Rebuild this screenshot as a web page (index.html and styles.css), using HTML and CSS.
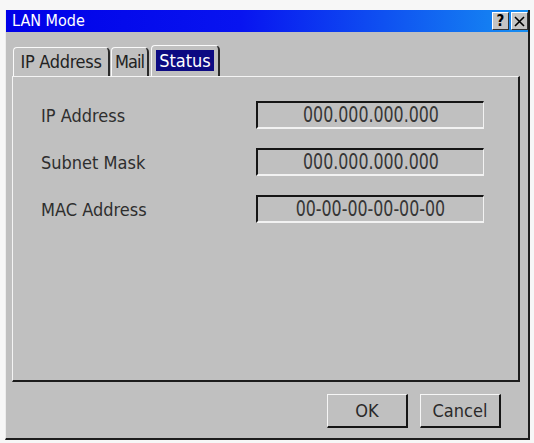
FILE: index.html
```html
<!DOCTYPE html>
<html>
<head>
<meta charset="utf-8">
<title>LAN Mode</title>
<link rel="stylesheet" href="styles.css">
</head>
<body>
<div class="window">
  <div class="titlebar">
    <span class="title">LAN Mode</span>
    <div class="tb-buttons">
      <span class="tb-btn help">?</span>
      <span class="tb-btn close"><svg width="11" height="11" viewBox="0 0 11 11"><path d="M1 1 L10 10 M10 1 L1 10" stroke="#000" stroke-width="1.6" fill="none"/></svg></span>
    </div>
  </div>
  <div class="content">
    <div class="tabs">
      <div class="tab tab-ip">IP Address</div>
      <div class="tab tab-mail">Mail</div>
      <div class="tab tab-status active"><span class="sel">Status</span></div>
    </div>
    <div class="panel">
      <div class="grid">
        <span class="label">IP Address</span>
        <div class="field"><span class="value">000.000.000.000</span></div>
        <span class="label">Subnet Mask</span>
        <div class="field"><span class="value">000.000.000.000</span></div>
        <span class="label">MAC Address</span>
        <div class="field"><span class="value">00-00-00-00-00-00</span></div>
      </div>
    </div>
    <div class="actions">
      <button class="btn">OK</button>
      <button class="btn">Cancel</button>
    </div>
  </div>
</div>
</body>
</html>
```
FILE: styles.css
```css
html, body {
  margin: 0;
  padding: 0;
  background: #f7f7f7;
}
body {
  font-family: "DejaVu Sans Condensed", "DejaVu Sans", sans-serif;
  font-stretch: condensed;
  color: #2a2a2a;
}
.window {
  margin: 10px 0 0 5px;
  width: 525px;
  height: 430px;
  box-sizing: border-box;
  background: #c0c0c0;
  border-left: 1px solid #ececec;
  border-right: 2px solid #1c1c1c;
  border-bottom: 2px solid #1c1c1c;
  display: flex;
  flex-direction: column;
}
.titlebar {
  height: 22px;
  flex: none;
  display: flex;
  align-items: center;
  justify-content: space-between;
  padding-left: 6px;
  background: linear-gradient(90deg, #0000e8 0%, #0814f0 45%, #168ef2 100%);
}
.title {
  color: #fff;
  font-size: 16px;
  line-height: 22px;
}
.tb-buttons {
  display: flex;
  gap: 2px;
  margin-right: 0;
}
.tb-btn {
  width: 17px;
  height: 18px;
  box-sizing: border-box;
  background: #c4c4c4;
  border-top: 1px solid #fff;
  border-left: 1px solid #fff;
  border-right: 1px solid #333;
  border-bottom: 1px solid #333;
  display: flex;
  align-items: center;
  justify-content: center;
  color: #000;
}
.help {
  font-family: "DejaVu Sans", sans-serif;
  font-weight: bold;
  font-size: 15px;
  line-height: 16px;
}
.content {
  flex: 1;
  display: flex;
  flex-direction: column;
  padding: 13px 8px 0 6px;
}
.tabs {
  display: flex;
  align-items: flex-end;
  height: 31px;
  padding-left: 1px;
}
.tab {
  box-sizing: border-box;
  height: 29px;
  border-top: 1px solid #fafafa;
  border-left: 1px solid #fafafa;
  border-right: 2px solid #2a2a2a;
  border-radius: 4px 5px 0 0;
  font-size: 18px;
  line-height: 27px;
  text-align: center;
  white-space: nowrap;
  color: #222;
}
.tab-ip { width: 97px; letter-spacing: -0.3px; }
.tab-mail { width: 38px; margin-left: 1px; letter-spacing: -1px; }
.tab-status { width: 69px; margin-left: 2px; }
.tab.active {
  height: 31px;
  line-height: 29px;
}
.sel {
  display: inline-block;
  background: #0c0a82;
  color: #fff;
  padding: 0 3px;
  line-height: 21px;
}
.panel {
  height: 306px;
  box-sizing: border-box;
  border-top: 1px solid #f4f4f4;
  border-left: 1px solid #f4f4f4;
  border-right: 2px solid #1c1c1c;
  border-bottom: 2px solid #1c1c1c;
  padding: 24px 0 0 28px;
}
.grid {
  display: grid;
  grid-template-columns: 215px 228px;
  grid-auto-rows: 28px;
  row-gap: 19px;
  align-items: center;
}
.label {
  font-size: 18px;
  color: #2e2e2e;
}
.field {
  height: 28px;
  box-sizing: border-box;
  border-top: 2px solid #151515;
  border-left: 2px solid #151515;
  border-right: 1px solid #f2f2f2;
  border-bottom: 2px solid #f2f2f2;
  display: flex;
  align-items: center;
  justify-content: center;
}
.value {
  display: inline-block;
  font-family: "DejaVu Sans Condensed", "DejaVu Sans", sans-serif;
  font-stretch: condensed;
  font-size: 22px;
  color: #363636;
  line-height: 24px;
  transform: scaleX(0.8);
}
.actions {
  display: flex;
  justify-content: flex-end;
  gap: 12px;
  padding: 12px 19px 0 0;
}
.btn {
  width: 81px;
  height: 34px;
  box-sizing: border-box;
  background: #c0c0c0;
  border-top: 1px solid #f6f6f6;
  border-left: 1px solid #f6f6f6;
  border-right: 2px solid #151515;
  border-bottom: 2px solid #151515;
  font-family: "DejaVu Sans Condensed", "DejaVu Sans", sans-serif;
  font-stretch: condensed;
  font-size: 18px;
  color: #2a2a2a;
  padding: 0;
}
```
